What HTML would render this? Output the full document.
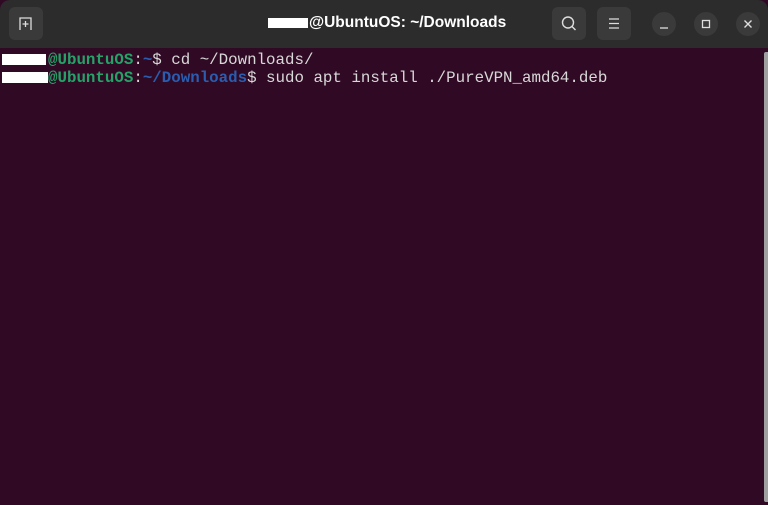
<!DOCTYPE html>
<html><head><meta charset="utf-8"><style>
*{margin:0;padding:0;box-sizing:border-box}
body{width:768px;height:505px;overflow:hidden;background:#300a24;font-family:"Liberation Sans",sans-serif;position:relative}
.hdr{position:absolute;left:0;top:0;width:768px;height:48px;background:#2c2c2c;border-radius:10px 10px 0 0}
.btn{position:absolute;top:7px;width:34px;height:33px;background:#3a3a3a;border-radius:6px}
.cir{position:absolute;top:12px;width:24px;height:24px;border-radius:50%;background:#3a3a3a}
.title{position:absolute;top:14px;left:268px;color:#fff;font-weight:bold;font-size:15.5px}
.wb{display:inline-block;background:#fff;vertical-align:middle}
.term{position:absolute;left:0;top:51px;font-family:"Liberation Mono",monospace;font-size:15.8px;line-height:18px;color:#d8d8d8;white-space:pre}
.g{color:#26a269;font-weight:bold}.b{color:#2a5db0;font-weight:bold}
.sb{position:absolute;left:764px;top:52px;width:4px;height:450px;background:#a0a0a0;border-radius:2px 0 0 2px}
</style></head><body>
<div class="hdr">
<div class="btn" style="left:9px"><svg width="34" height="33" viewBox="0 0 34 33"><path d="M11 23V11h11v12" fill="none" stroke="#ddd" stroke-width="1.3"/><path d="M16.5 14v6M13.5 17h6" stroke="#ddd" stroke-width="1.3"/></svg></div>
<div class="title"><span class="wb" style="width:40px;height:10px;margin-right:1px"></span>@UbuntuOS: ~/Downloads</div>
<div class="btn" style="left:552px"><svg width="34" height="33" viewBox="0 0 34 33"><circle cx="16" cy="15.5" r="5.5" fill="none" stroke="#ddd" stroke-width="1.4"/><path d="M20 19.5l3.5 3.5" stroke="#ddd" stroke-width="1.4"/></svg></div>
<div class="btn" style="left:597px"><svg width="34" height="33" viewBox="0 0 34 33"><path d="M12 12h10M12 16.5h10M12 21h10" stroke="#ddd" stroke-width="1.2"/></svg></div>
<div class="cir" style="left:652px"><svg width="24" height="24"><path d="M8 16h8" stroke="#ddd" stroke-width="1.3"/></svg></div>
<div class="cir" style="left:694px"><svg width="24" height="24"><rect x="8.5" y="8.5" width="7" height="7" fill="none" stroke="#ddd" stroke-width="1.3"/></svg></div>
<div class="cir" style="left:736px"><svg width="24" height="24"><path d="M8.5 8.5l7 7M15.5 8.5l-7 7" stroke="#ddd" stroke-width="1.4"/></svg></div>
</div>
<div class="term"><span class="wb" style="width:44px;height:11px;margin-left:2px;margin-right:2px;vertical-align:-1px"></span><span class="g">@UbuntuOS</span>:<span class="b">~</span>$ cd ~/Downloads/
<span class="wb" style="width:46px;height:11px;margin-left:2px;vertical-align:-1px"></span><span class="g">@UbuntuOS</span>:<span class="b">~/Downloads</span>$ sudo apt install ./PureVPN_amd64.deb</div>
<div class="sb"></div>
</body></html>
